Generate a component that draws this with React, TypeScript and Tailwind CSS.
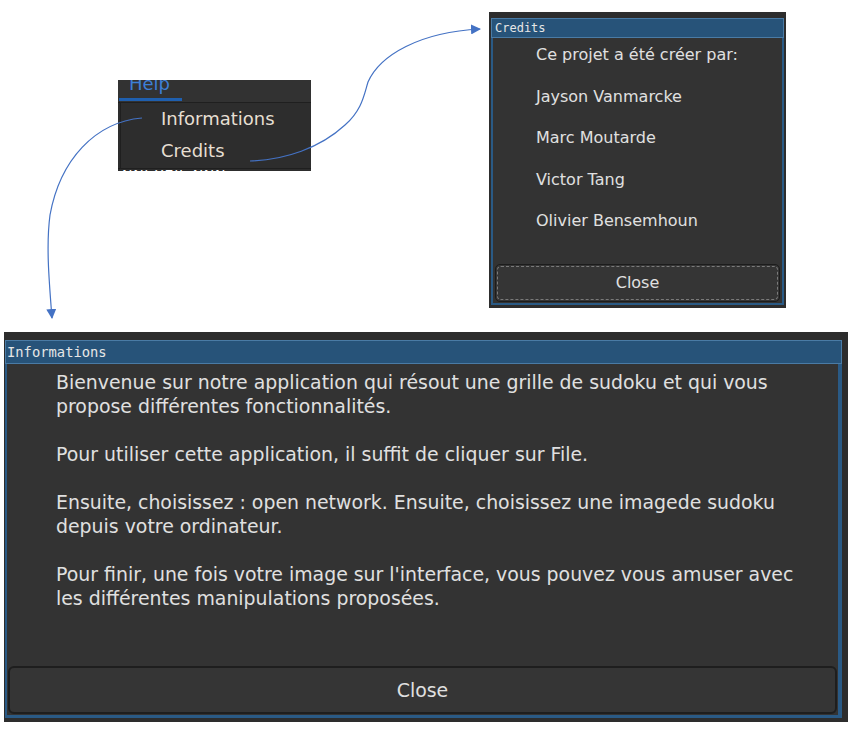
import React from 'react';

const sans = "font-['DejaVu_Sans','Liberation_Sans',sans-serif]";
const mono = "font-['DejaVu_Sans_Mono','Liberation_Mono',monospace]";

function Arrows() {
  return (
    <svg className="absolute inset-0 pointer-events-none" width="858" height="730" viewBox="0 0 858 730">
      <defs>
        <marker id="head" markerWidth="10" markerHeight="10" refX="9" refY="5" orient="auto" markerUnits="userSpaceOnUse">
          <path d="M0,0 L10,5 L0,10 z" fill="#4472c4" />
        </marker>
      </defs>
      <path
        d="M250,161 C285,160 320,148 345,125 C362,110 364,95 368,82 C380,55 420,32 480,29"
        fill="none"
        stroke="#4472c4"
        strokeWidth="1.2"
        markerEnd="url(#head)"
      />
      <path
        d="M142,118 C95,122 60,160 50,215 C46,245 49,280 52,318"
        fill="none"
        stroke="#4472c4"
        strokeWidth="1.2"
        markerEnd="url(#head)"
      />
    </svg>
  );
}

function MenuCrop() {
  return (
    <div className={`absolute left-[118px] top-[80px] w-[193px] h-[91px] overflow-hidden bg-[#2d2d2d] ${sans}`}>
      {/* menubar strip, cropped at the top */}
      <div className="relative h-[23px] bg-[#323232] border-b border-[#1f1f1f]">
        <span className="absolute left-[11px] -top-[8px] text-[18px] leading-[24px] text-[#3d7fd6]">Help</span>
        <div className="absolute left-[1px] bottom-[1px] w-[63px] h-[3px] bg-[#1f5fae]" />
      </div>
      {/* popup */}
      <div className="ml-[2px] border-l border-[#1f1f1f] h-[65px] flex flex-col pl-[40px] text-[18px] text-[#e6dfd2]">
        <div className="h-[31px] flex items-center leading-none">Informations</div>
        <div className="h-[34px] flex items-center leading-none">Credits</div>
      </div>
      <div className="h-[3px] overflow-hidden border-t border-[#1f1f1f] bg-[#2d2d2d] relative">
        <span className="absolute left-[4px] -top-[1px] text-[14px] leading-[14px] text-white tracking-wider">NNI XEIL NNN</span>
      </div>
    </div>
  );
}

function CreditsDialog() {
  const names = ['Jayson Vanmarcke', 'Marc Moutarde', 'Victor Tang', 'Olivier Bensemhoun'];
  return (
    <div className="absolute left-[489px] top-[12px] w-[297px] h-[296px] bg-[#2d2d2d] pt-[6px] px-[2px] pb-[3px] flex flex-col">
      <div className={`h-[20px] bg-[#275379] border border-[#4a7ba5] px-[3px] text-[12px] leading-[18px] text-[#e6e6e6] ${mono}`}>
        Credits
      </div>
      <div className={`flex-1 bg-[#333333] border-x-2 border-b-2 border-[#2a5a85] flex flex-col ${sans}`}>
        <div className="flex flex-col pl-[43px] text-[16px] text-[#e0e0e0]">
          <div className="h-[34px] flex items-center">Ce projet a été créer par:</div>
          <div className="h-[4px]" />
          {names.map((n) => (
            <div key={n} className="h-[41.5px] flex items-center">{n}</div>
          ))}
        </div>
        <div className="flex-1" />
        <div className="mx-[2px] mb-[1px] h-[38px] rounded-[5px] border border-[#1c1c1c] bg-[#353535] p-[1px]">
          <div className="h-full rounded-[4px] border border-dashed border-[#7a7a7a] flex items-center justify-center text-[16px] text-[#e0e0e0]">
            Close
          </div>
        </div>
      </div>
    </div>
  );
}

function InformationsDialog() {
  return (
    <div className="absolute left-[4px] top-[332px] w-[844px] h-[390px] bg-[#2d2d2d] pt-[8px] pl-[1px] pr-[6px] pb-[4px] flex flex-col">
      <div className={`h-[24px] bg-[#275379] border border-[#4a7ba5] px-[1px] text-[13.8px] leading-[22px] text-[#e6e6e6] ${mono}`}>
        Informations
      </div>
      <div className={`flex-1 bg-[#333333] border-l-[2px] border-r-[4px] border-b-[3px] border-[#2a5a85] flex flex-col ${sans}`}>
        <div className="pl-[49px] pt-[6px] text-[18.9px] leading-[24px] text-[#e0e0e0]">
          <p>Bienvenue sur notre application qui résout une grille de sudoku et qui vous</p>
          <p className="mb-[24px]">propose différentes fonctionnalités.</p>
          <p className="mb-[24px]">Pour utiliser cette application, il suffit de cliquer sur File.</p>
          <p>Ensuite, choisissez : open network. Ensuite, choisissez une imagede sudoku</p>
          <p className="mb-[24px]">depuis votre ordinateur.</p>
          <p>Pour finir, une fois votre image sur l'interface, vous pouvez vous amuser avec</p>
          <p>les différentes manipulations proposées.</p>
        </div>
        <div className="flex-1" />
        <div className="ml-[1px] mr-[1px] mb-[1px] h-[48px] rounded-[6px] border-2 border-[#1e1e1e] bg-[#353535] flex items-center justify-center pt-[1px] text-[18.9px] text-[#e0e0e0]">
          Close
        </div>
      </div>
    </div>
  );
}

export default function App() {
  return (
    <div className="relative w-[858px] h-[730px] bg-white overflow-hidden">
      <MenuCrop />
      <CreditsDialog />
      <InformationsDialog />
      <Arrows />
    </div>
  );
}
